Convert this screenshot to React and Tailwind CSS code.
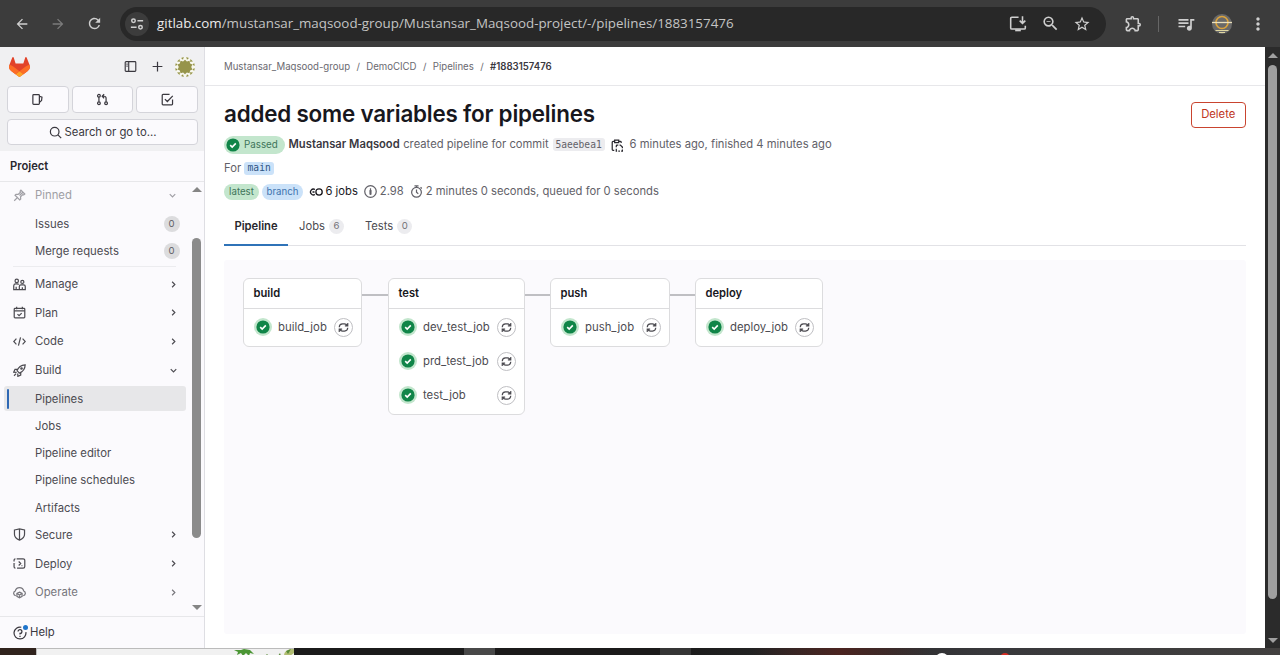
import React from "react";
import {
  MdZoomOut, MdStarBorder, MdOutlineExtension, MdQueueMusic, MdMoreVert,
  MdArrowBack, MdArrowForward, MdRefresh,
} from "react-icons/md";

function Icon({ children, className = "size-[13px]", sw = 1.5 }) {
  return (
    <svg viewBox="0 0 16 16" fill="none" stroke="currentColor" strokeWidth={sw} className={"shrink-0 " + className}>
      {children}
    </svg>
  );
}

const icons = {
  pin: <path d="M1.500 14.500L6 10M9.800 1.500l4.700 4.700-1.200 1-1.300-.3-2.700 2.700.2 2.700-1.200 1.200L2.500 7.700l1.200-1.200 2.700.2L9.100 4l-.3-1.300zM8 8l4-4" />,
  manage: <><circle cx="4.600" cy="3.600" r="2.100" /><circle cx="11.500" cy="4.800" r="1.900" /><path d="M7 14.200H.9V9.500a2.500 2.500 0 0 1 2.500-2.300h1.800a2.300 2.300 0 0 1 1.800.8M7.800 14.200V10.500a2 2 0 0 1 2-2h3.300a2 2 0 0 1 2 2v3.700zM3.900 14v-3.200M11.500 14v-2.500" /></>,
  plan: <><rect x="1.500" y="3" width="13" height="11.500" rx="1" /><path d="M1.500 6h13M4.500 .8V4M11.500 .8V4M5.500 10l2 2 3.200-3.300" /></>,
  code: <path d="M4.200 4.500L.9 8l3.300 3.500M11.800 4.500L15.100 8l-3.300 3.500M9.300 3L6.700 13" />,
  build: <><path d="M5 8.200C6.500 4 9.500 1.300 15 1c-.2 5.500-3 8.600-7.200 10.200L5 8.200zM5.500 6.500L2.500 6.500.9 10l3.600.2M9.500 10.800v2.900L6 15.200l-.2-3.500M3.800 11.800L1.300 14.500" /><circle cx="10.500" cy="5.500" r=".9" /></>,
  secure: <path d="M8 1v14M1.800 2.500L8 1l6.200 1.500v5.300C14.200 11 12 13.500 8 15 4 13.500 1.800 11 1.800 7.800z" />,
  deploy: <path d="M4.500 2.200h8A2 2 0 0 1 14.500 4.200v7.600a2 2 0 0 1-2 2H5M3 13.800a1.700 1.700 0 0 1-1.700-1.700V7.500M1.300 5.500V4A1.700 1.700 0 0 1 3 2.300M7 5.500L9.500 8 7 10.500M3.500 8h.1M10.500 10.500h1" />,
  operate: <><path d="M3.500 12A3 3 0 0 1 2.800 6.200 5.300 5.300 0 0 1 13.200 6.200 3 3 0 0 1 12.500 12" /><path d="M8 7.500l3.200 1.700v3.600L8 14.500l-3.200-1.700V9.200zM5 9.300l3 1.700 3-1.700M8 11v3.200" /></>,
};

function Chevron({ down }) {
  return (
    <Icon className="size-[11px]" sw={1.7}>
      <path d={down ? "M4 6L8 10 12 6" : "M6 4L10 8 6 12"} />
    </Icon>
  );
}

function Section({ icon, label, down, className = "" }) {
  return (
    <div className={"flex h-[28.700px] shrink-0 items-center pl-[13px] pr-[26px] " + className}>
      <Icon>{icons[icon]}</Icon>
      <span className="ml-[9px] flex-1 pt-px text-[11.300px]">{label}</span>
      <Chevron down={down} />
    </div>
  );
}

function Item({ label, count }) {
  return (
    <div className="flex h-[27.200px] shrink-0 items-center pl-[35px] pr-[25px]">
      <span className="flex-1 pt-px text-[11.300px]">{label}</span>
      {count !== undefined && <span className="flex h-4 w-4 items-center justify-center rounded-full bg-[#dcdcde] text-[9.600px] text-[#626168]">{count}</span>}
    </div>
  );
}

function TopButton({ children }) {
  return <div className="flex h-[27px] flex-1 items-center justify-center rounded-[4px] border border-[#d4d4da] bg-[#fbfafd]">{children}</div>;
}

function Sidebar() {
  return (
    <aside className="flex w-[205px] shrink-0 flex-col border-r border-[#dedee3] bg-[#fbfafd] text-[#4c4b51]">
      <div className="h-[104px] shrink-0 bg-[#f0f0f2] pl-[7px] pr-[6px]">
        <div className="flex h-[39px] items-center text-[#3a383f]">
          <svg viewBox="0 0 25 24" className="ml-[2px] h-[20px] w-[21px]">
            <path fill="#E24329" d="m24.507 9.500-.034-.09L21.082.562a.896.896 0 0 0-1.694.091l-2.290 7.010H7.825L5.535.653a.898.898 0 0 0-1.694-.09L.451 9.411.416 9.500a6.297 6.297 0 0 0 2.090 7.278l.012.010.030.022 5.160 3.867 2.560 1.935 1.554 1.176a1.051 1.051 0 0 0 1.268 0l1.555-1.176 2.560-1.935 5.197-3.890.014-.010A6.297 6.297 0 0 0 24.507 9.500Z" />
            <path fill="#FC6D26" d="m24.507 9.500-.034-.09a11.440 11.440 0 0 0-4.560 2.051l-7.447 5.632 4.742 3.584 5.197-3.890.014-.010A6.297 6.297 0 0 0 24.507 9.500Z" />
            <path fill="#FCA326" d="m7.707 20.677 2.560 1.935 1.555 1.176a1.051 1.051 0 0 0 1.268 0l1.555-1.176 2.560-1.935-4.743-3.584-4.755 3.584Z" />
            <path fill="#FC6D26" d="M5.010 11.461a11.430 11.430 0 0 0-4.560-2.050L.416 9.500a6.297 6.297 0 0 0 2.090 7.278l.012.010.030.022 5.160 3.867 4.745-3.584-7.444-5.632Z" />
          </svg>
          <Icon className="ml-[94px] size-[13px]" sw={1.4}><rect x="1.500" y="2" width="13" height="12" rx="1" /><path d="M5.800 2v12M3 5h1.500M3 7.500h1.500" /></Icon>
          <Icon className="ml-[14px] size-[13px]"><path d="M8 2v12M2 8h12" /></Icon>
          <svg viewBox="0 0 20 20" className="ml-[11px] size-5">
            <circle cx="10" cy="10" r="10" fill="#f7f7ee" />
            <g fill="#96944a">
              <path d="M10 2.700l1.900 1.700 2.600-.6 .6 2.600 2.300 1.100L16.200 10l1.200 2.500-2.300 1.100-.6 2.600-2.600-.6L10 17.300l-1.900-1.700-2.600.6-.6-2.600-2.300-1.100L3.800 10 2.600 7.500l2.300-1.100.6-2.600 2.600.6z" />
              <path d="M6 .9l2.800-.8L8 2.700zM14 .9L11.200 .1 12 2.700zM6 19.100l2.800.8L8 17.300zM14 19.100l-2.800.8.8-2.600zM.9 6L.1 8.800 2.700 8zM.9 14L.1 11.200 2.700 12zM19.100 6l.8 2.800L17.300 8zM19.100 14l.8-2.800-2.600.8z" />
              <path d="M2 4.500L4.500 2 5 4.800zM18 4.500L15.500 2 15 4.800zM2 15.500L4.500 18l.5-2.800zM18 15.500L15.500 18l-.5-2.800z" />
            </g>
          </svg>
        </div>
        <div className="flex gap-[3px] text-[#3a383f]">
          <TopButton><Icon><rect x="2.300" y="2" width="8" height="12" rx="1" /><path d="M10.500 4l3 1.200-.5 4-2.500 2.300" /></Icon></TopButton>
          <TopButton><Icon><circle cx="3.600" cy="3.500" r="1.700" /><circle cx="3.600" cy="12.500" r="1.700" /><circle cx="12.400" cy="12.500" r="1.700" /><path d="M3.600 5.200v5.600M12.400 10.800V6.500a2.500 2.500 0 0 0-2.500-2.500H8M10 1.500L7.600 4 10 6.500" /></Icon></TopButton>
          <TopButton><Icon><path d="M10.500 1.800H2.500a1 1 0 0 0-1 1v10.700a1 1 0 0 0 1 1h10.700a1 1 0 0 0 1-1V8M4.800 7.500l3 3L14.500 3.500" /></Icon></TopButton>
        </div>
        <div className="mt-[6px] flex h-[26px] items-center justify-center rounded-[4px] border border-[#d4d4da] bg-[#fbfafd] text-[11.300px] text-[#3a383f]">
          <Icon className="mr-[3px] size-[13px]"><circle cx="7" cy="7" r="5.300" /><path d="M11 11l4 4" /></Icon>
          <span className="pt-px">Search or go to...</span>
        </div>
      </div>
      <div className="flex h-[31px] shrink-0 items-center border-b border-[#e7e7ea] pl-[10px] text-[11.200px] font-semibold text-[#28272d]">Project</div>
      <div className="flex h-[434px] shrink-0">
        <nav className="flex w-[189px] shrink-0 flex-col overflow-hidden">
          <Section icon="pin" label="Pinned" down className="-mt-[1px] w-[205px] pr-[27px] text-[#a09fa5]" />
          <div className="w-[205px] shrink-0 pr-[0.500px] pt-[0.600px]"><Item label="Issues" count={0} /><Item label="Merge requests" count={0} /></div>
          <div className="mx-[13px] mb-[3px] mt-[1px] h-px shrink-0 bg-[#ececef]" />
          <div className="w-[205px] shrink-0">
            <Section icon="manage" label="Manage" />
            <Section icon="plan" label="Plan" />
            <Section icon="code" label="Code" />
            <Section icon="build" label="Build" down />
          </div>
          <div className="mb-[1px] ml-[4px] mt-[2px] flex h-[25px] w-[182px] shrink-0 items-center rounded-[3px] bg-[#e7e7e9] pl-[3px]">
            <span className="h-[20px] w-[2px] rounded-full bg-[#2f68b4]" />
            <span className="ml-[26px] pt-px text-[11.300px]">Pipelines</span>
          </div>
          <Item label="Jobs" />
          <Item label="Pipeline editor" />
          <Item label="Pipeline schedules" />
          <Item label="Artifacts" />
          <div className="-mt-[0.700px] w-[205px] shrink-0">
            <Section icon="secure" label="Secure" />
            <Section icon="deploy" label="Deploy" />
            <Section icon="operate" label="Operate" className="text-[#77767c]" />
          </div>
        </nav>
        <div className="flex w-[15px] shrink-0 flex-col items-center">
          <svg viewBox="0 0 10 5" className="mt-[5px] h-[5px] w-[10px]"><path d="M0 5L5 0l5 5z" fill="#858585" /></svg>
          <div className="mt-[46px] h-[300px] w-[9px] rounded-full bg-[#8b8b8b]" />
          <svg viewBox="0 0 10 5" className="mt-[67px] h-[5px] w-[10px]"><path d="M0 0l5 5 5-5z" fill="#858585" /></svg>
        </div>
      </div>
      <div className="flex flex-1 items-center border-t border-[#e7e7ea] pl-[13px] text-[11.300px] text-[#3a383f]">
        <span className="relative">
          <Icon className="size-[14px]" sw={1.400}><path d="M9.500 1.400A6.800 6.800 0 1 0 14.700 7M5.800 6.300A2.200 2.200 0 1 1 8 8.500v1.300M8 11v1.600" /></Icon>
          <span className="absolute -right-[1px] -top-[1px] size-[5px] rounded-full bg-[#1f75cb]" />
        </span>
        <span className="ml-[3px]">Help</span>
      </div>
    </aside>
  );
}

function Check({ halo }) {
  return (
    <svg viewBox="0 0 18 18" className="size-[18px] shrink-0">
      {halo && <circle cx="9" cy="9" r="9" fill="#c3e6cd" />}
      <circle cx="9" cy="9" r="6.600" fill="#108548" />
      <path d="M6.200 9.200l2 1.900 3.600-3.700" fill="none" stroke="#fff" strokeWidth="1.600" />
    </svg>
  );
}

function Stage({ name, jobs, className }) {
  return (
    <div className={"shrink-0 rounded-[6px] border border-[#dcdcde] bg-white " + className}>
      <div className="flex h-[30px] items-center border-b border-[#dcdcde] pl-[9.500px] text-[11.200px] font-semibold text-[#18171d]">{name}</div>
      <div className="flex flex-col gap-[14px] pb-[9px] pl-[9.500px] pr-[8.500px] pt-[8px]">
        {jobs.map((j) => (
          <div key={j} className="flex h-5 items-center">
            <Check halo />
            <span className="ml-[6.500px] flex-1 whitespace-nowrap pt-px text-[11.350px] text-[#4c4b51]">{j}</span>
            <span className="flex size-[19px] items-center justify-center rounded-full border border-[#bfbfc3] text-[#4c4b51]">
              <Icon className="size-[11px]" sw={1.700}><path d="M1.800 7.500A5 5 0 0 1 6.500 2.700H9.500A5 5 0 0 1 13.500 5.300M14.200 1.500V5.700H10M14.200 8.500a5 5 0 0 1-4.700 4.800H6.500A5 5 0 0 1 2.500 10.700M1.800 14.500V10.300H6" /></Icon>
            </span>
          </div>
        ))}
      </div>
    </div>
  );
}

function Link({ className }) {
  return <div className={"mt-[16px] h-[2px] shrink-0 bg-[#bfbfc3] " + className} />;
}

function Main() {
  return (
    <main className="flex min-w-0 flex-1 flex-col bg-white text-[11.230px] text-[#626168]">
      <div className="flex h-[39px] shrink-0 items-center border-b border-[#e7e7ea] pl-[19px] pt-[2px] text-[9.620px] text-[#6a6970]">
        <span>Mustansar_Maqsood-group</span><span className="mx-[6.400px]">/</span>
        <span>DemoCICD</span><span className="mx-[6.400px]">/</span>
        <span>Pipelines</span><span className="mx-[6.400px]">/</span>
        <span className="font-semibold text-[#3a383f]">#1883157476</span>
      </div>
      <div className="flex flex-1 flex-col pl-[19px] pr-[19px]">
        <div className="mt-[14px] flex h-[28px] items-center justify-between">
          <h1 className="text-[22.400px] font-semibold tracking-[-0.200px] text-[#18171d]">added some variables for pipelines</h1>
          <button className="mt-[1px] h-[26px] w-[55.500px] rounded-[4px] border border-[#c9442f] text-[11.300px] text-[#c0341d]">Delete</button>
        </div>
        <div className="mt-[7px] flex h-[19px] items-center whitespace-nowrap">
          <span className="flex h-[18px] w-[61px] items-center rounded-full bg-[#c3e6cd] text-[9.800px] text-[#40755a]"><Check /><span className="ml-[2px] pt-px">Passed</span></span>
          <span className="ml-[3.500px] font-semibold text-[#3a383f]">Mustansar Maqsood</span>
          <span className="ml-[3.500px]">created pipeline for commit</span>
          <span className="ml-[4px] flex h-[13px] w-[52px] items-center justify-center rounded-[3px] bg-[#ececef] pt-px font-['DejaVu_Sans_Mono',monospace] text-[9.600px]">5aeebea1</span>
          <Icon className="ml-[6px] mt-[1px] size-[13px] text-[#28272d]"><path d="M4 14H2.500a1 1 0 0 1-1-1V4a1 1 0 0 1 1-1H4M10 3h1.500a1 1 0 0 1 1 1v1M4.500 1.500h5v3h-5zM6.500 10V8.500a1 1 0 0 1 1-1H9M10.500 7.500h1l2.500 2.500v1.500M14 13v2h-1.500M11 15H9M7.500 15h-1v-3" /></Icon>
          <span className="ml-[6px]">6 minutes ago, finished 4 minutes ago</span>
        </div>
        <div className="mt-[5px] flex h-[18px] items-center">For<span className="ml-[3px] flex h-[13px] w-[30px] items-center justify-center rounded-[3px] bg-[#cbe2f9] pt-px font-['DejaVu_Sans_Mono',monospace] text-[9.600px] text-[#2f5483]">main</span></div>
        <div className="mt-[5.500px] flex h-[18px] items-center whitespace-nowrap">
          <span className="flex h-4 w-[35px] items-center justify-center rounded-full bg-[#c3e6cd] pt-px text-[9.700px] text-[#40755a]">latest</span>
          <span className="ml-[3px] flex h-4 w-[41px] items-center justify-center rounded-full bg-[#cbe2f9] pt-px text-[9.700px] text-[#3d73ae]">branch</span>
          <Icon className="ml-[6px] size-[14px] text-[#18171d]" sw={1.500}><path d="M6.800 5.200A3.300 3.300 0 1 0 6.800 10.800M4 8h2.300" /><circle cx="11.500" cy="8" r="3.600" /></Icon>
          <span className="ml-[2.500px] text-[#18171d]">6 jobs</span>
          <Icon className="ml-[6px] size-[13px]"><circle cx="8" cy="8" r="7.100" /><path d="M8 4v4" /><path d="M8 7v4" strokeWidth="2.600" strokeLinecap="round" /></Icon>
          <span className="ml-[3px]">2.98</span>
          <Icon className="ml-[6px] size-[13px]"><circle cx="8" cy="9" r="6" /><path d="M8 5.500V9l2.200 1.800M5.500 1h5M8 1v2M13 2.800l1.500 1.500" /></Icon>
          <span className="ml-[3px]">2 minutes 0 seconds, queued for 0 seconds</span>
        </div>
        <div className="mt-[5.500px] flex h-[40px] border-b border-[#e2e2e6] text-[#4c4b51]">
          <div className="-mb-px flex w-[64px] justify-center border-b-2 border-[#2f73b8] pt-[12px] font-semibold leading-[16px] text-[#28272d]">Pipeline</div>
          <div className="ml-[11px] flex h-[40px] items-center">Jobs<span className="ml-[4px] flex size-[15px] items-center justify-center rounded-full bg-[#ececef] text-[9.600px] text-[#737278]">6</span></div>
          <div className="ml-[21px] flex h-[40px] items-center">Tests<span className="ml-[4px] flex size-[15px] items-center justify-center rounded-full bg-[#ececef] text-[9.600px] text-[#737278]">0</span></div>
        </div>
        <div className="mt-[14px] flex h-[374px] items-start rounded-[3px] bg-[#fbfafd] pl-[19px] pt-[18px]">
          <div className="flex items-start">
            <Stage name="build" jobs={["build_job"]} className="w-[119px]" /><Link className="w-[26px]" />
            <Stage name="test" jobs={["dev_test_job", "prd_test_job", "test_job"]} className="w-[137px]" /><Link className="w-[25px]" />
            <Stage name="push" jobs={["push_job"]} className="w-[120px]" /><Link className="w-[25px]" />
            <Stage name="deploy" jobs={["deploy_job"]} className="w-[128px]" />
          </div>
        </div>
      </div>
    </main>
  );
}

function BrowserBar() {
  return (
    <header className="flex h-[47px] shrink-0 items-center bg-[#3c3c3c] text-[#cfcfcf]">
      <MdArrowBack className="ml-[14px] size-4" />
      <MdArrowForward className="ml-[20px] size-4 text-[#7b7b7b]" />
      <MdRefresh className="ml-[20px] size-[17px]" />
      <div className="ml-[17px] flex h-[34px] w-[986px] items-center rounded-full bg-[#282828]">
        <span className="ml-[5px] flex size-[24px] items-center justify-center rounded-full bg-[#3c3c3c]">
          <Icon className="size-[14px]" sw={1.700}><circle cx="4" cy="4.200" r="2" /><path d="M8.500 4.200H15M1 11.800h6.500" /><circle cx="12" cy="11.800" r="2" /></Icon>
        </span>
        <span className="ml-[8px] flex-1 font-['Open_Sans','Noto_Sans',sans-serif] text-[13.370px] text-[#c4c4c4]"><span className="text-[#ececec]">gitlab.com</span>/mustansar_maqsood-group/Mustansar_Maqsood-project/-/pipelines/1883157476</span>
        <Icon className="size-[18px]" sw={1.400}><path d="M8.500 2H2.500a1 1 0 0 0-1 1v8.500a1 1 0 0 0 1 1h11a1 1 0 0 0 1-1V9.500M12 1v6M9.500 5L12 7.500 14.500 5" /><path d="M5.500 13.600h5" strokeWidth="1.800" /></Icon>
        <MdZoomOut className="ml-[14px] size-[19px]" />
        <MdStarBorder className="ml-[13px] mr-[15px] size-[18px]" />
      </div>
      <MdOutlineExtension className="ml-[18px] size-[19px]" />
      <span className="ml-[15px] h-4 w-px bg-[#666]" />
      <MdQueueMusic className="ml-[17px] size-[20px]" />
      <svg viewBox="0 0 20 20" className="ml-[16px] size-5">
        <circle cx="10" cy="10" r="10" fill="#696969" />
        <circle cx="10" cy="8.500" r="6" fill="none" stroke="#dba33c" strokeWidth="1.700" />
        <path d="M0 8.500h20" stroke="#ece0bb" strokeWidth="1.300" /><path d="M3.500 16.500h13M7 18.500h6" stroke="#dfd6a0" strokeWidth="1.100" />
      </svg>
      <MdMoreVert className="ml-[16px] size-[20px]" />
    </header>
  );
}

export default function App() {
  return (
    <div className="flex h-[655px] w-[1280px] flex-col overflow-hidden bg-[#282828] font-['Inter','Liberation_Sans',sans-serif]">
      <BrowserBar />
      <div className="flex h-[601px] shrink-0 shadow-[inset_0_1px_0_#999]">
        <Sidebar />
        <Main />
        <div className="flex w-[15px] shrink-0 flex-col items-center bg-[#2b2b2b]">
          <svg viewBox="0 0 10 5" className="mt-[6px] h-[5px] w-[10px]"><path d="M0 5L5 0l5 5z" fill="#a0a0a0" /></svg>
          <div className="mt-[7px] h-[534px] w-[9px] rounded-full bg-[#9f9f9f]" />
          <svg viewBox="0 0 10 5" className="mt-[39px] h-[5px] w-[10px]"><path d="M0 0l5 5 5-5z" fill="#a0a0a0" /></svg>
        </div>
      </div>
      <footer className="flex h-[7px] shrink-0">
        <div className="w-[36px] bg-[#30231d]" />
        <div className="flex w-[258px] justify-end border-l border-t border-[#bbb] bg-[#f1f1f1]">
          <svg viewBox="0 0 60 7" className="h-[7px] w-[60px]">
            <path d="M0 1l7 0 3-1 6 1 4 4-4-1-1 3-3-3-3 3-2-3-4 2 1-3z" fill="#4b9634" /><path d="M50 7c0-5 4-7 10-7v4l-4 3z" fill="#b1bd72" /><path d="M52 2l5-2-3 5zM31 7l2-2 2 2zM44 7l2-3 1 3z" fill="#568a36" />
          </svg>
        </div>
        <div className="w-[170px] bg-[#1b1b1b]" /><div className="w-[31px] bg-[#484848]" />
        <div className="w-[165px] bg-[#1b1a1a]" /><div className="w-[31px] bg-[#353535]" />
        <div className="flex flex-1 justify-between overflow-hidden bg-linear-to-r from-[#1c1c1c] via-[#38383b] to-[#42403f]">
          <div className="ml-[60px] h-full w-[180px] bg-linear-to-r from-transparent via-[#4b2420] to-transparent" />
          <div className="mr-[270px] flex gap-[51px] pt-[5px]"><span className="h-[14px] w-[14px] rounded-full bg-white" /><span className="h-[10px] w-[10px] rounded-full bg-[#d42d24]" /></div>
        </div>
      </footer>
    </div>
  );
}
